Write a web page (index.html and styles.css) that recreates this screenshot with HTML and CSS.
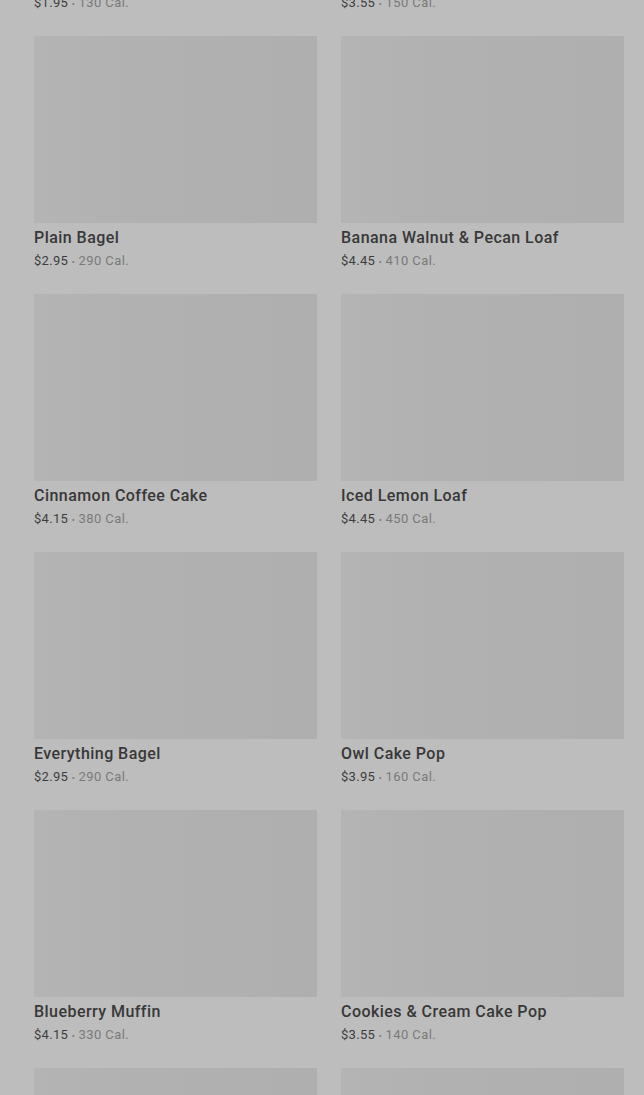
FILE: index.html
```html
<!DOCTYPE html>
<html>
<head>
<meta charset="utf-8">
<link rel="stylesheet" href="styles.css">
</head>
<body>
<div class="page">
  <div class="grid">
    <div class="card"><div class="img"></div><div class="name">Butter Croissant</div><div class="meta"><span class="price">$1.95</span> <span class="dot">•</span> <span class="cal">130 Cal.</span></div></div>
    <div class="card"><div class="img"></div><div class="name">Cheese Danish</div><div class="meta"><span class="price">$3.55</span> <span class="dot">•</span> <span class="cal">150 Cal.</span></div></div>
    <div class="card"><div class="img"></div><div class="name">Plain Bagel</div><div class="meta"><span class="price">$2.95</span> <span class="dot">•</span> <span class="cal">290 Cal.</span></div></div>
    <div class="card"><div class="img"></div><div class="name">Banana Walnut &amp; Pecan Loaf</div><div class="meta"><span class="price">$4.45</span> <span class="dot">•</span> <span class="cal">410 Cal.</span></div></div>
    <div class="card"><div class="img"></div><div class="name">Cinnamon Coffee Cake</div><div class="meta"><span class="price">$4.15</span> <span class="dot">•</span> <span class="cal">380 Cal.</span></div></div>
    <div class="card"><div class="img"></div><div class="name">Iced Lemon Loaf</div><div class="meta"><span class="price">$4.45</span> <span class="dot">•</span> <span class="cal">450 Cal.</span></div></div>
    <div class="card"><div class="img"></div><div class="name">Everything Bagel</div><div class="meta"><span class="price">$2.95</span> <span class="dot">•</span> <span class="cal">290 Cal.</span></div></div>
    <div class="card"><div class="img"></div><div class="name">Owl Cake Pop</div><div class="meta"><span class="price">$3.95</span> <span class="dot">•</span> <span class="cal">160 Cal.</span></div></div>
    <div class="card"><div class="img"></div><div class="name">Blueberry Muffin</div><div class="meta"><span class="price">$4.15</span> <span class="dot">•</span> <span class="cal">330 Cal.</span></div></div>
    <div class="card"><div class="img"></div><div class="name">Cookies &amp; Cream Cake Pop</div><div class="meta"><span class="price">$3.55</span> <span class="dot">•</span> <span class="cal">140 Cal.</span></div></div>
    <div class="card"><div class="img"></div><div class="name">Chocolate Croissant</div><div class="meta"><span class="price">$3.65</span> <span class="dot">•</span> <span class="cal">300 Cal.</span></div></div>
    <div class="card"><div class="img"></div><div class="name">Birthday Cake Pop</div><div class="meta"><span class="price">$3.55</span> <span class="dot">•</span> <span class="cal">170 Cal.</span></div></div>
  </div>
</div>
</body>
</html>
```

FILE: styles.css
```css
html, body {
  margin: 0;
  padding: 0;
  background: #bdbdbd;
  overflow: hidden;
  height: 1095px;
}
.page {
  padding: 0 20px 0 34px;
  font-family: Roboto, "Liberation Sans", sans-serif;
}
.grid {
  margin-top: -222px;
  display: grid;
  grid-template-columns: 283px 283px;
  column-gap: 24px;
  row-gap: 23px;
}
.img {
  height: 187px;
  background: linear-gradient(90deg, #b4b4b4 0%, #b1b1b1 35%, #afafaf 100%);
}
.name {
  margin-top: 3px;
  height: 24px;
  line-height: 24px;
  font-size: 16px;
  font-weight: 500;
  color: #383838;
  letter-spacing: 0.45px;
}
.meta {
  margin-top: 1px;
  height: 20px;
  line-height: 20px;
  font-size: 13px;
  color: #3d3d3d;
  letter-spacing: 0.3px;
}
.dot {
  color: #777;
  font-size: 9px;
}
.cal {
  color: #7a7a7a;
  letter-spacing: 0.4px;
}
```
